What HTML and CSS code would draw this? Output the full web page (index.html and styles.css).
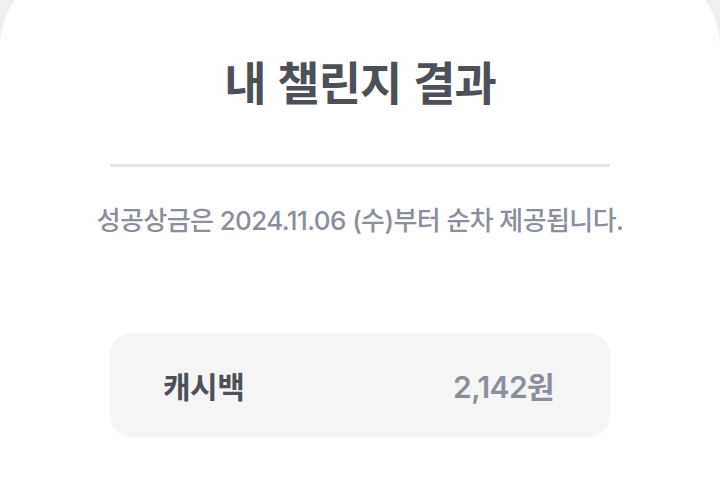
FILE: index.html
```html
<!DOCTYPE html>
<html lang="ko">
<head>
<meta charset="utf-8">
<link rel="stylesheet" href="styles.css">
</head>
<body>
<div class="sheet">
  <div class="content">
    <h1 class="title">내 챌린지 결과</h1>
    <hr class="divider">
    <p class="notice">성공상금은 2024.11.06 (수)부터 순차 제공됩니다.</p>
    <div class="card">
      <span class="card-label">캐시백</span>
      <span class="card-value">2,142원</span>
    </div>
  </div>
</div>
</body>
</html>
```
FILE: styles.css
```css
html, body {
  margin: 0;
  padding: 0;
  background: #efeff1;
  font-family: Inter, "Noto Sans CJK KR", sans-serif;
}
.sheet {
  margin-top: -34px;
  background: #ffffff;
  border-radius: 80px 80px 0 0;
  height: 517px;
  display: flex;
  justify-content: center;
}
.content {
  width: 500px;
  display: flex;
  flex-direction: column;
  align-items: stretch;
  padding-top: 86px;
}
.title {
  margin: 0;
  text-align: center;
  font-family: "Noto Sans CJK KR", sans-serif;
  font-size: 46px;
  font-weight: 700;
  color: #4e5058;
  line-height: 56px;
  letter-spacing: -1px;
}
.divider {
  margin: 56px 0 0;
  border: 0;
  height: 3px;
  background: #e4e4e8;
}
.notice {
  margin: 37px -20px 0;
  text-align: center;
  font-size: 26px;
  font-weight: 500;
  color: #8b8f9c;
  line-height: 34px;
  letter-spacing: -0.6px;
}
.card {
  margin-top: 95px;
  height: 104px;
  background: #f5f5f6;
  border-radius: 22px;
  display: flex;
  align-items: center;
  justify-content: space-between;
  padding: 0 56px 0 53px;
}
.card-label {
  font-family: "Noto Sans CJK KR", sans-serif;
  font-size: 30px;
  font-weight: 700;
  color: #4e5058;
  letter-spacing: -0.5px;
}
.card-value {
  font-size: 30px;
  font-weight: 600;
  color: #8b8f9c;
  letter-spacing: -0.6px;
}
```
